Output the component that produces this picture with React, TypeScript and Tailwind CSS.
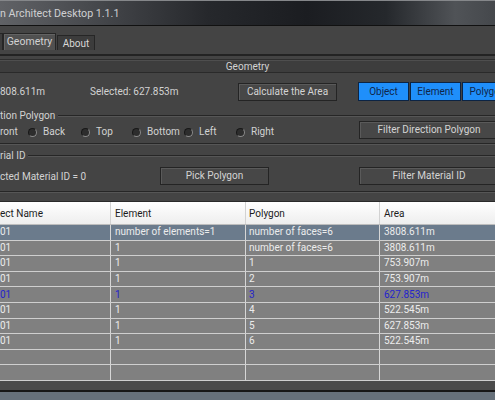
import React from "react";

type Row = { name: string; element: string; polygon: string; area: string; selected?: boolean; blue?: boolean };

const rows: Row[] = [
  { name: "01", element: "number of elements=1", polygon: "number of faces=6", area: "3808.611m", selected: true },
  { name: "01", element: "1", polygon: "number of faces=6", area: "3808.611m" },
  { name: "01", element: "1", polygon: "1", area: "753.907m" },
  { name: "01", element: "1", polygon: "2", area: "753.907m" },
  { name: "01", element: "1", polygon: "3", area: "627.853m", blue: true },
  { name: "01", element: "1", polygon: "4", area: "522.545m" },
  { name: "01", element: "1", polygon: "5", area: "627.853m" },
  { name: "01", element: "1", polygon: "6", area: "522.545m" },
  { name: "", element: "", polygon: "", area: "" },
  { name: "", element: "", polygon: "", area: "" },
];

function Etched() {
  return <div className="h-[2px] border-t border-b border-t-[#262626] border-b-[#565656]" />;
}

function GroupHeader({ label }: { label: string }) {
  return (
    <div className="flex items-center">
      <span className="leading-none">{label}</span>
      <div className="ml-[3px] flex-1">
        <Etched />
      </div>
    </div>
  );
}

function GrayButton({ label, className }: { label: string; className: string }) {
  return (
    <button className={`h-[18px] shrink-0 border border-[#242424] bg-[#474747] text-[#d4d4d4] leading-none shadow-[inset_1px_1px_0_#5a5a5a] ${className}`}>
      {label}
    </button>
  );
}

function BlueButton({ label }: { label: string }) {
  return (
    <button className="h-[19px] w-[51px] shrink-0 border border-[#0c2444] bg-[#1f8ffb] text-[#10264a] leading-none">
      {label}
    </button>
  );
}

function Radio({ label, className }: { label: string; className: string }) {
  return (
    <div className={`flex shrink-0 items-center ${className}`}>
      <span className="h-[9px] w-[9px] rounded-full border border-t-[#181818] border-l-[#181818] border-r-[#8a8a8a] border-b-[#8a8a8a] bg-[#2d2d2d]" />
      <span className="ml-[6px] leading-none">{label}</span>
    </div>
  );
}

export default function App() {
  return (
    <div className="h-[400px] w-[495px] overflow-hidden bg-[#444444] font-['Roboto',sans-serif] text-[10px] text-[#d2d2d2]">
      {/* title bar */}
      <div className="flex h-[26px] items-center border-t border-b border-t-[#85878a] border-b-[#111111] bg-[linear-gradient(90deg,#606266_0%,#45474b_20%,#26282c_42%,#1b1d21_62%,#25282c_78%,#505357_92%,#45484c_100%)] pt-[2px]">
        <span className="text-[10.7px] leading-none text-[#cfd0d2]">n Architect Desktop 1.1.1</span>
      </div>

      {/* tabs */}
      <div className="flex h-[28px] items-end pb-[4px]">
        <div className="h-[17px] w-[3px] border-r border-t border-[#262626] bg-[#3d3d3d]" />
        <div className="flex h-[17px] w-[53px] items-center justify-center border border-b-0 border-[#262626] bg-[#505050] text-[10.5px] shadow-[inset_1px_1px_0_#636363]">
          Geometry
        </div>
        <div className="ml-px flex h-[15px] w-[38px] items-center justify-center border border-b-0 border-[#262626] bg-[#3c3c3c] text-[#d8d8d8]">
          About
        </div>
      </div>
      <div className="h-[2px] bg-[#232323]" />

      {/* geometry band */}
      <div className="mt-[3px] flex h-[14px] items-center justify-center border-t border-b border-t-[#2e2e2e] border-b-[#2a2a2a] bg-[#3d3d3d] shadow-[inset_0_1px_0_#4e4e4e]">
        Geometry
      </div>

      {/* area row */}
      <div className="mt-[9px] flex h-[19px] items-center">
        <span className="w-[90px] shrink-0">808.611m</span>
        <span className="w-[148px] shrink-0">Selected: 627.853m</span>
        <GrayButton label="Calculate the Area" className="w-[99px]" />
        <div className="w-[21px] shrink-0" />
        <div className="flex gap-[1px]">
          <BlueButton label="Object" />
          <BlueButton label="Element" />
          <BlueButton label="Polygon" />
        </div>
      </div>

      {/* direction polygon */}
      <div className="mt-[10px] h-[10px]">
        <GroupHeader label="tion Polygon" />
      </div>
      <div className="flex h-[18px] items-start">
        <div className="flex h-[18px] items-center pt-[4px]">
          <span className="w-[28px] shrink-0 leading-none">ront</span>
          <Radio label="Back" className="w-[53px]" />
          <Radio label="Top" className="w-[51px]" />
          <Radio label="Bottom" className="w-[52px]" />
          <Radio label="Left" className="w-[52px]" />
          <Radio label="Right" className="w-[60px]" />
        </div>
        <div className="w-[63px] shrink-0" />
        <GrayButton label="Filter Direction Polygon" className="w-[140px]" />
      </div>
      <div className="mt-[4px]">
        <Etched />
      </div>

      {/* material id */}
      <div className="mt-[5px] flex h-[11px] items-center">
        <div className="flex-1">
          <GroupHeader label="rial ID" />
        </div>
      </div>
      <div className="mt-[6px] flex h-[18px] items-center">
        <span className="w-[160px] shrink-0">cted Material ID = 0</span>
        <GrayButton label="Pick Polygon" className="w-[109px]" />
        <div className="w-[90px] shrink-0" />
        <GrayButton label="Filter Material ID" className="w-[140px]" />
      </div>
      <div className="mt-[6px]">
        <Etched />
      </div>

      {/* table */}
      <div className="mt-[8px] border-t border-[#2a2a2a]">
        <div className="grid h-[23px] grid-cols-[111px_135px_134px_1fr] border-b border-[#bdbdbd] bg-[linear-gradient(180deg,#ffffff,#eeeeee)] text-[#1c1c1c]">
          <div className="flex items-center border-r border-[#d2d2d2]">ect Name</div>
          <div className="flex items-center border-r border-[#d2d2d2] pl-[4px]">Element</div>
          <div className="flex items-center border-r border-[#d2d2d2] pl-[3px]">Polygon</div>
          <div className="flex items-center pl-[4px]">Area</div>
        </div>
        {rows.map((r, i) => (
          <div
            key={i}
            className={`grid h-[15.6px] grid-cols-[111px_135px_134px_1fr] border-b border-[#cfcfcf] leading-none ${
              r.selected ? "bg-[#6b7b8c]" : "bg-[#808080]"
            } ${r.blue ? "text-[#2424cc]" : "text-[#ececec]"}`}
          >
            <div className="flex items-center border-r border-[#d6d6d6]">{r.name}</div>
            <div className="flex items-center border-r border-[#d6d6d6] pl-[4px]">{r.element}</div>
            <div className="flex items-center border-r border-[#d6d6d6] pl-[3px]">{r.polygon}</div>
            <div className="flex items-center pl-[4px]">{r.area}</div>
          </div>
        ))}
        <div className="h-[9px] bg-[#4b4b4b]" />
        <div className="h-[2px] bg-[#161616]" />
        <div className="h-[12px] bg-[#66707a]" />
      </div>
    </div>
  );
}
